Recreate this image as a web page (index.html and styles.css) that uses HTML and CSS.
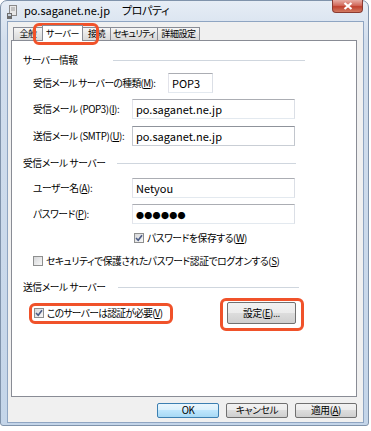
FILE: index.html
```html
<!DOCTYPE html>
<html lang="ja">
<head>
    <meta charset="UTF-8">
    <title>po.saganet.ne.jp プロパティ</title>
    <link rel="stylesheet" href="styles.css">
</head>
<body>
    <div class="window">
        <div class="titlebar">
            <svg class="app-icon" width="10" height="14" viewBox="0 0 10 14">
                <rect x="2.5" y="0.5" width="7" height="10" fill="#e8e8e8" stroke="#8a8a8a"/>
                <line x1="4" y1="3" x2="8" y2="3" stroke="#9a9a9a"/>
                <line x1="4" y1="5" x2="8" y2="5" stroke="#9a9a9a"/>
                <rect x="0" y="8" width="5" height="6" fill="#6d6d6d"/>
                <rect x="1" y="9" width="3" height="2" fill="#c9d3de"/>
            </svg>
            <span class="title-host">po.saganet.ne.jp</span>
            <span class="title-name">プロパティ</span>
            <div class="close-btn">
                <svg width="10" height="8" viewBox="0 0 10 8">
                    <path d="M1.5 1 L8.5 7 M8.5 1 L1.5 7" stroke="#ffffff" stroke-width="2.2"/>
                </svg>
            </div>
        </div>

        <div class="client">
            <div class="tabs">
                <div class="tab tab-general">全般</div>
                <div class="tab tab-server active">サーバー</div>
                <div class="tab tab-connect">接続</div>
                <div class="tab tab-security">セキュリティ</div>
                <div class="tab tab-advanced">詳細設定</div>
            </div>

            <div class="panel">
                <div class="group-title first">
                    <span class="caption">サーバー情報</span>
                    <span class="rule"></span>
                </div>
                <div class="row row-type">
                    <label class="label wide">受信メール サーバーの種類(<u>M</u>):</label>
                    <div class="field short">POP3</div>
                </div>
                <div class="row row-pop">
                    <label class="label">受信メール (POP3)(<u>I</u>):</label>
                    <div class="field">po.saganet.ne.jp</div>
                </div>
                <div class="row row-smtp">
                    <label class="label">送信メール (SMTP)(<u>U</u>):</label>
                    <div class="field hover">po.saganet.ne.jp</div>
                </div>

                <div class="group-title second">
                    <span class="caption">受信メール サーバー</span>
                    <span class="rule"></span>
                </div>
                <div class="row row-user">
                    <label class="label">ユーザー名(<u>A</u>):</label>
                    <div class="field">Netyou</div>
                </div>
                <div class="row row-pass">
                    <label class="label">パスワード(<u>P</u>):</label>
                    <div class="field"><span class="dots">●●●●●●</span></div>
                </div>
                <div class="check check-save">
                    <span class="box">
                        <svg width="8" height="8" viewBox="0 0 8 8"><path d="M1 4 L3.2 6.2 L7 1.2" fill="none" stroke="#4a5b85" stroke-width="1.6"/></svg>
                    </span>
                    <span>パスワードを保存する(<u>W</u>)</span>
                </div>
                <div class="check check-spa">
                    <span class="box"></span>
                    <span>セキュリティで保護されたパスワード認証でログオンする(<u>S</u>)</span>
                </div>

                <div class="group-title third">
                    <span class="caption">送信メール サーバー</span>
                    <span class="rule"></span>
                </div>
                <div class="row row-auth">
                    <div class="check check-auth">
                        <span class="box">
                            <svg width="8" height="8" viewBox="0 0 8 8"><path d="M1 4 L3.2 6.2 L7 1.2" fill="none" stroke="#4a5b85" stroke-width="1.6"/></svg>
                        </span>
                        <span class="auth-text">このサーバーは認証が必要(<u>V</u>)</span>
                    </div>
                    <button class="button settings">設定(<u>E</u>)...</button>
                </div>
            </div>

            <div class="actions">
                <button class="button default">OK</button>
                <button class="button">キャンセル</button>
                <button class="button">適用(<u>A</u>)</button>
            </div>
        </div>

        <!-- 注目ポイントの赤枠 -->
        <div class="mark mark-tab"></div>
        <div class="mark mark-auth"></div>
        <div class="mark mark-settings"></div>
    </div>
</body>
</html>
```

FILE: styles.css
```css
body {
    margin: 0;
    background-color: #ffffff;
    font-family: "Noto Sans CJK JP", "Noto Sans", sans-serif;
    font-size: 9.75px;
    font-feature-settings: "palt";
    letter-spacing: -0.4px;
    white-space: nowrap;
    color: #000000;
}
u {
    text-decoration: underline;
    text-underline-offset: 1px;
}
.window {
    position: relative;
    width: 357px;
    height: 422px;
    padding: 0 4px 2px 6px;
    border: 1px solid #8093ab;
    border-radius: 7px 7px 3px 3px;
    background: linear-gradient(#e6edf5, #d2deed 40px, #c4d5e9);
}
.titlebar {
    display: flex;
    align-items: flex-start;
    height: 20px;
    font-size: 11px;
    letter-spacing: 0;
}
.app-icon {
    margin-top: 4px;
}
.title-host {
    margin-left: 7px;
    margin-top: 2px;
    line-height: 15px;
}
.title-name {
    margin-left: 12px;
    margin-top: 2px;
    line-height: 15px;
    letter-spacing: -0.4px;
}
.close-btn {
    display: flex;
    align-items: center;
    justify-content: center;
    width: 29px;
    height: 12px;
    margin: -1px 1px 0 auto;
    border: 1px solid #8b3b31;
    border-top: none;
    border-radius: 0 0 4px 4px;
    background: linear-gradient(#e8ada4, #d26a5c 45%, #c0412f 55%, #d27a62);
}
.client {
    height: 400px;
    border: 1px solid #8fa5c2;
    background-color: #f0f0f0;
}
.tabs {
    display: flex;
    align-items: flex-end;
    height: 18px;
    margin-left: 5px;
}
.tab {
    box-sizing: border-box;
    height: 13px;
    border: 1px solid #898c95;
    border-bottom: none;
    border-left: none;
    background: linear-gradient(#f6f6f6, #e6e6e6 50%, #dadada);
    text-align: center;
    line-height: 12px;
    font-size: 9px;
    letter-spacing: -0.4px;
}
.tab-general {
    width: 30px;
    border-left: 1px solid #898c95;
}
.tab-connect {
    width: 28px;
}
.tab-security {
    width: 47px;
    letter-spacing: -0.8px;
}
.tab-advanced {
    width: 42px;
}
.tab.active {
    position: relative;
    z-index: 1;
    width: 41px;
    height: 16px;
    margin-left: -1px;
    margin-bottom: -1px;
    border-left: 1px solid #898c95;
    background: #ffffff;
    line-height: 15px;
}
.panel {
    box-sizing: border-box;
    width: 346px;
    height: 357px;
    margin-left: 3px;
    padding: 0 0 0 11px;
    border: 1px solid #898c95;
    background-color: #ffffff;
}
.group-title {
    display: flex;
    align-items: center;
    height: 14px;
}
.group-title .rule {
    height: 1px;
    background-color: #cfd6de;
}
.group-title.first {
    margin-top: 12px;
}
.group-title.first .caption {
    width: 90px;
}
.group-title.first .rule {
    width: 192px;
}
.group-title.second {
    margin-top: 10px;
}
.group-title.second .caption {
    width: 94px;
}
.group-title.second .rule {
    width: 179px;
}
.group-title.third {
    margin-top: 12px;
}
.group-title.third .caption {
    width: 95px;
}
.group-title.third .rule {
    width: 181px;
}
.row {
    display: flex;
    align-items: center;
    height: 20px;
    padding-left: 10px;
}
.label {
    width: 99px;
    flex: none;
}
.label.wide {
    width: 135px;
    letter-spacing: -0.6px;
}
.field {
    box-sizing: border-box;
    width: 163px;
    height: 20px;
    padding: 0 3px;
    border: 1px solid;
    border-color: #abadb3 #dbdfe6 #e3e9ef #e2e3ea;
    line-height: 18px;
    font-size: 11px;
    letter-spacing: 0;
}
.field.short {
    width: 45px;
}
.field.hover {
    border-color: #8f939b #c2c6cd #c9ced5 #c2c6cd;
}
.dots {
    font-size: 8px;
    letter-spacing: 0.3px;
}
.row-type {
    margin-top: 6px;
}
.row-pop {
    margin-top: 6px;
}
.row-smtp {
    margin-top: 7px;
}
.row-user {
    margin-top: 8px;
}
.row-pass {
    margin-top: 6px;
}
.check {
    display: flex;
    align-items: center;
    height: 14px;
}
.check-save {
    margin-top: 7px;
    padding-left: 111px;
}
.check-spa {
    margin-top: 9px;
    padding-left: 10px;
}
.box {
    box-sizing: border-box;
    display: flex;
    align-items: center;
    justify-content: center;
    width: 10px;
    height: 10px;
    margin-right: 3px;
    border: 1px solid #8e8f8f;
    background: linear-gradient(135deg, #d6d7d9, #f8f8f8);
}
.row-auth {
    height: 22px;
    margin-top: 8px;
    padding-left: 11px;
}
.check-auth {
    width: 193px;
    flex: none;
}
.auth-text {
    letter-spacing: -0.7px;
}
.button {
    box-sizing: border-box;
    width: 62px;
    height: 15px;
    padding: 0;
    border: 1px solid #707070;
    border-radius: 2px;
    background: linear-gradient(#f2f2f2, #ebebeb 50%, #dddddd 50%, #cfcfcf);
    font-family: inherit;
    font-size: 9.75px;
    font-feature-settings: "palt";
    letter-spacing: -0.4px;
    line-height: 13px;
    color: #000000;
}
.button.settings {
    width: 69px;
    height: 22px;
}
.button.default {
    border-color: #3c7fb1;
    background: linear-gradient(#eaf6fd, #d9f0fc 50%, #bee6fd 50%, #a7d9f5);
}
.actions {
    display: flex;
    justify-content: flex-end;
    gap: 7px;
    margin-top: 6px;
    padding-right: 6px;
}
.mark {
    position: absolute;
    box-sizing: border-box;
    border: 3px solid #f0522a;
    border-radius: 6px;
}
.mark-tab {
    left: 32px;
    top: 22px;
    width: 66px;
    height: 22px;
}
.mark-auth {
    left: 28px;
    top: 302px;
    width: 144px;
    height: 21px;
}
.mark-settings {
    left: 219px;
    top: 297px;
    width: 84px;
    height: 33px;
}
```
